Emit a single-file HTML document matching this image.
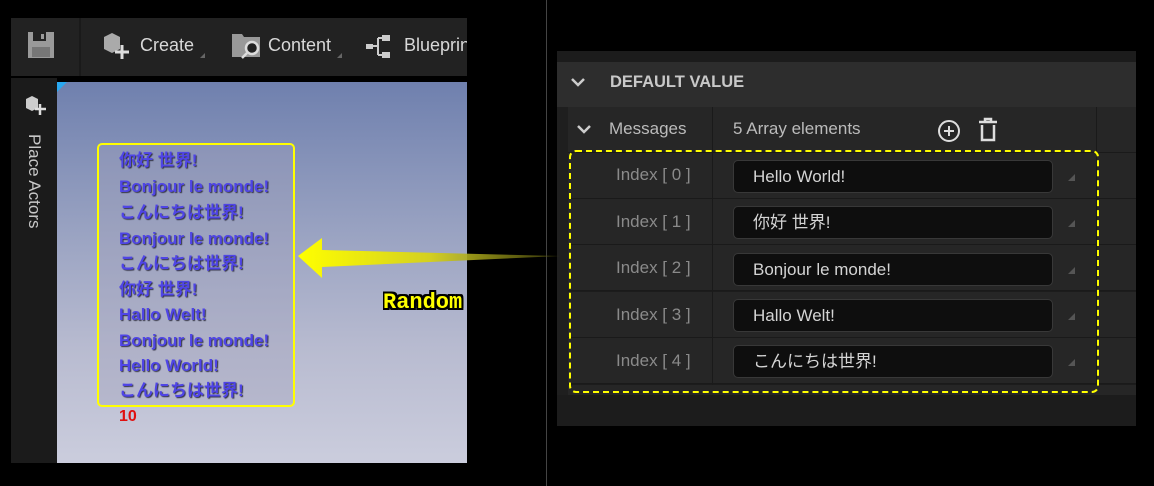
<!DOCTYPE html>
<html><head><meta charset="utf-8"><style>
body{margin:0;width:1154px;height:486px;background:#000;position:relative;overflow:hidden;font-family:"Liberation Sans","Noto Sans CJK JP",sans-serif}
.a{position:absolute}
.tb{left:11px;top:18px;width:456px;height:58px;background:#222;overflow:hidden}
.tt{color:#d8d8d8;font-size:18px;top:35px;white-space:nowrap}
.strip{left:11px;top:78px;width:46px;height:385px;background:#1b1b1b}
.vp{left:57px;top:82px;width:410px;height:381px;background:linear-gradient(180deg,#6f80ae 0%,#9aa3c2 40%,#b8bbd0 70%,#cbcddd 100%);overflow:hidden}
.box{left:97px;top:143px;width:194px;height:260px;border:2px solid #ffff00;border-radius:5px;background:rgba(160,160,185,.35)}
.ln{left:119px;color:#4f45e6;font-size:17px;line-height:20px;height:20px;font-weight:bold;text-shadow:1px 1px 1px #334;white-space:nowrap}
.rp{left:557px;top:51px;width:579px;height:375px;background:#1c1c1c}
.row{left:557px;width:579px;height:45px;background:#262626;border-bottom:1px solid #1a1a1a}
.idx{left:616px;color:#8a8a8a;font-size:17px}
.inp{left:733px;width:318px;height:31px;background:#0e0e0e;border:1px solid #383838;border-radius:5px;color:#d4d4d4;font-size:17px;line-height:31px}
.inp span{margin-left:19px}
.tri{left:1068px;width:0;height:0;border-left:7px solid transparent;border-bottom:7px solid #555}
</style></head><body>
<div class="a tb"><div class="a tt" style="left:393px;top:17px">Blueprints</div></div>
<div class="a" style="left:79px;top:18px;width:2px;height:58px;background:#1a1a1a"></div>
<svg class="a" style="left:28px;top:32px" width="30" height="28"><rect x="0" y="0" width="26" height="26" fill="#9a9a9a"/><rect x="5" y="0" width="13" height="9" fill="#222"/><rect x="13" y="2" width="3" height="5" fill="#9a9a9a"/><rect x="4" y="15" width="18" height="10" fill="#777"/></svg>
<svg class="a" style="left:102px;top:31px" width="32" height="30"><path d="M2 6 L10 2 L18 6 L18 18 L10 22 L2 18Z" fill="#aaa"/><path d="M20 14v14M13 21h14" stroke="#ddd" stroke-width="3"/></svg>
<div class="a tt" style="left:140px">Create</div>
<svg class="a" style="left:232px;top:30px" width="32" height="30"><path d="M0 4h10l2 3h16v20H0Z" fill="#999"/><circle cx="20" cy="18" r="6" fill="#222" stroke="#ddd" stroke-width="2.5"/><path d="M15 23l-5 5" stroke="#ddd" stroke-width="2.5"/></svg>
<div class="a tt" style="left:268px">Content</div>
<svg class="a" style="left:366px;top:34px" width="32" height="26"><rect x="0" y="10" width="7" height="5" fill="#ccc"/><path d="M7 12h5M12 4v17M12 4h4M12 21h4" stroke="#ccc" stroke-width="2" fill="none"/><rect x="16" y="1" width="8" height="6" fill="#ccc"/><rect x="16" y="18" width="8" height="6" fill="#ccc"/></svg>
<div class="a" style="left:200px;top:53px;border-left:5px solid transparent;border-bottom:5px solid #666"></div>
<div class="a" style="left:337px;top:53px;border-left:5px solid transparent;border-bottom:5px solid #666"></div>
<div class="a strip"></div>
<svg class="a" style="left:24px;top:94px" width="24" height="24"><path d="M2 5 L8 2 L14 5 L14 14 L8 17 L2 14Z" fill="#ccc"/><path d="M16 10v11M11 15h11" stroke="#ddd" stroke-width="2.5"/></svg>
<div class="a" style="left:24px;top:134px;color:#c8c8c8;font-size:17px;writing-mode:vertical-rl">Place Actors</div>
<div class="a vp"></div>
<div class="a" style="left:57px;top:82px;border-right:10px solid transparent;border-top:10px solid #2aa8f0"></div>
<div class="a box"></div>
<div class="a ln" style="top:151px">你好 世界!</div>
<div class="a ln" style="top:177px">Bonjour le monde!</div>
<div class="a ln" style="top:203px">こんにちは世界!</div>
<div class="a ln" style="top:229px">Bonjour le monde!</div>
<div class="a ln" style="top:254px">こんにちは世界!</div>
<div class="a ln" style="top:280px">你好 世界!</div>
<div class="a ln" style="top:305px">Hallo Welt!</div>
<div class="a ln" style="top:331px">Bonjour le monde!</div>
<div class="a ln" style="top:356px">Hello World!</div>
<div class="a ln" style="top:381px">こんにちは世界!</div>
<div class="a" style="left:119px;top:408px;color:#e01010;font-size:16px;font-weight:bold">10</div>
<div class="a" style="left:546px;top:0;width:1px;height:486px;background:#444"></div>
<div class="a rp"></div>
<div class="a" style="left:557px;top:62px;width:579px;height:45px;background:#2d2d2d;border-bottom:1px solid #1a1a1a"></div>
<svg class="a" style="left:570px;top:77px" width="16" height="12"><path d="M2 2l6 6 6-6" stroke="#ccc" stroke-width="2.5" fill="none"/></svg>
<div class="a" style="left:610px;top:73px;color:#c8c8c8;font-size:16.5px;font-weight:bold">DEFAULT VALUE</div>
<div class="a row" style="top:107px"></div>
<svg class="a" style="left:576px;top:124px" width="16" height="12"><path d="M2 2l6 6 6-6" stroke="#ccc" stroke-width="2.5" fill="none"/></svg>
<div class="a" style="left:609px;top:119px;color:#bbb;font-size:17px">Messages</div>
<div class="a" style="left:733px;top:119px;color:#bbb;font-size:17px">5 Array elements</div>
<svg class="a" style="left:937px;top:119px" width="26" height="24"><circle cx="12" cy="12" r="10" stroke="#ddd" stroke-width="2" fill="none"/><path d="M12 7v10M7 12h10" stroke="#ddd" stroke-width="2"/></svg>
<svg class="a" style="left:977px;top:117px" width="24" height="26"><path d="M2 5h18M8 5V2h6v3" stroke="#ddd" stroke-width="2.5" fill="none"/><path d="M5 8v15h12V8" stroke="#ddd" stroke-width="2.5" fill="none"/></svg>
<div class="a row" style="top:153px"></div>
<div class="a row" style="top:199px"></div>
<div class="a row" style="top:245px"></div>
<div class="a row" style="top:292px"></div>
<div class="a row" style="top:338px"></div>
<div class="a" style="left:557px;top:385px;width:579px;height:10px;background:#262626"></div>
<div class="a" style="left:712px;top:107px;width:1px;height:278px;background:#1a1a1a"></div>
<div class="a" style="left:1096px;top:107px;width:1px;height:278px;background:#1a1a1a"></div>
<div class="a" style="left:557px;top:107px;width:11px;height:288px;background:#1f1f1f"></div>
<div class="a idx" style="top:165px">Index [ 0 ]</div>
<div class="a idx" style="top:212px">Index [ 1 ]</div>
<div class="a idx" style="top:258px">Index [ 2 ]</div>
<div class="a idx" style="top:305px">Index [ 3 ]</div>
<div class="a idx" style="top:351px">Index [ 4 ]</div>
<div class="a inp" style="top:160px"><span>Hello World!</span></div>
<div class="a inp" style="top:206px"><span>你好 世界!</span></div>
<div class="a inp" style="top:253px"><span>Bonjour le monde!</span></div>
<div class="a inp" style="top:299px"><span>Hallo Welt!</span></div>
<div class="a inp" style="top:345px"><span>こんにちは世界!</span></div>
<div class="a tri" style="top:174px"></div><div class="a tri" style="top:220px"></div><div class="a tri" style="top:267px"></div><div class="a tri" style="top:313px"></div><div class="a tri" style="top:359px"></div>
<div class="a" style="left:569px;top:150px;width:526px;height:239px;border:2px dashed #ffff00;border-radius:7px"></div>
<svg class="a" style="left:290px;top:230px" width="275" height="55"><defs><linearGradient id="g" x1="0" x2="1"><stop offset="0" stop-color="#ffff00"/><stop offset=".5" stop-color="#d4d020"/><stop offset="1" stop-color="#5a5a10" stop-opacity=".6"/></linearGradient></defs><path d="M8 26 L32 8 L32 20 L270 26 L32 37 L32 48Z" fill="url(#g)"/></svg>
<div class="a" style="left:383px;top:290px;width:84px;overflow:hidden;color:#ffff00;font:bold 22px 'Liberation Mono',monospace;text-shadow:-2px 0 #000,2px 0 #000,0 -2px #000,0 2px #000,2px 2px #000,-2px -2px #000,2px -2px #000,-2px 2px #000;white-space:nowrap">Random</div>
</body></html>
